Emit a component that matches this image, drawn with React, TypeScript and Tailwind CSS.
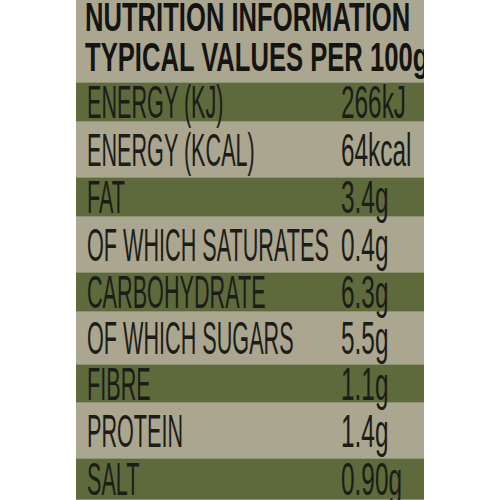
import React from "react";

type Row = { label: string; value: string; green: boolean; h: string };

const rows: Row[] = [
  { label: "ENERGY (KJ)", value: "266kJ", green: true, h: "h-[40px]" },
  { label: "ENERGY (KCAL)", value: "64kcal", green: false, h: "h-[55px]" },
  { label: "FAT", value: "3.4g", green: true, h: "h-[40px]" },
  { label: "OF WHICH SATURATES", value: "0.4g", green: false, h: "h-[55px]" },
  { label: "CARBOHYDRATE", value: "6.3g", green: true, h: "h-[40px]" },
  { label: "OF WHICH SUGARS", value: "5.5g", green: false, h: "h-[52px]" },
  { label: "FIBRE", value: "1.1g", green: true, h: "h-[39px]" },
  { label: "PROTEIN", value: "1.4g", green: false, h: "h-[55px]" },
  { label: "SALT", value: "0.90g", green: true, h: "h-[42px]" },
];

export default function App() {
  return (
    <div className="w-[500px] h-[500px] bg-white overflow-hidden font-['Liberation_Sans',Arial,sans-serif]">
      <div className="w-[348px] h-[500px] mx-auto bg-[#aaa690] overflow-hidden text-[#1d1d17]">
        <div className="h-[82px] overflow-hidden pl-[9px]">
          <div className="-mt-[3px] font-bold text-[40px] leading-[40px] text-[#141410] whitespace-nowrap">
            <div className="inline-block origin-left scale-x-[0.64]">NUTRITION INFORMATION</div>
            <div className="block">
              <span className="inline-block origin-left scale-x-[0.64]">TYPICAL VALUES PER 100g</span>
            </div>
          </div>
        </div>
        {rows.map((r) => (
          <div
            key={r.label}
            className={`${r.h} flex items-center whitespace-nowrap text-[46px] leading-none ${
              r.green ? "bg-[#5e6a3c] border-y border-[#8c9473]" : "bg-[#aaa690]"
            }`}
          >
            <div className="w-[265px] shrink-0 pl-[11px]">
              <span className="inline-block origin-left scale-x-[0.47]">{r.label}</span>
            </div>
            <div className="shrink-0">
              <span className="inline-block origin-left scale-x-[0.53]">{r.value}</span>
            </div>
          </div>
        ))}
      </div>
    </div>
  );
}
